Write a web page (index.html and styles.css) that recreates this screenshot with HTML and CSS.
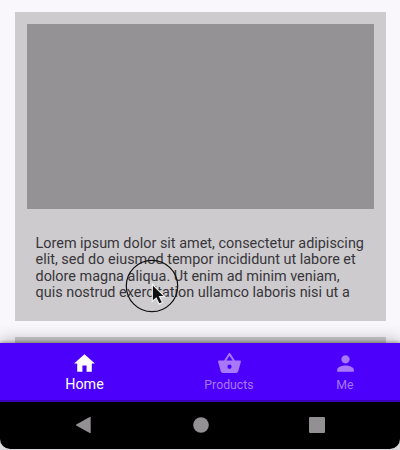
FILE: index.html
```
<!DOCTYPE html>
<html lang="en">
<head>
<meta charset="utf-8">
<title>Home</title>
<link rel="stylesheet" href="styles.css">
</head>
<body>
<div class="screen">
  <main class="feed">
    <article class="card">
      <div class="media"></div>
      <p class="copy"><span class="line">Lorem ipsum dolor sit amet, consectetur adipiscing</span><span class="line">elit, sed do eiusmod tempor incididunt ut labore et</span><span class="line">dolore magna aliqua. Ut enim ad minim veniam,</span><span class="line">quis nostrud exercitation ullamco laboris nisi ut a</span></p>
    </article>
    <article class="card next"></article>
  </main>
  <nav class="tabs">
    <a class="tab active">
      <svg class="icon" viewBox="0 0 24 24"><path d="M10 20v-6h4v6h5v-8h3L12 3 2 12h3v8z"/></svg>
      <span>Home</span>
    </a>
    <a class="tab">
      <svg class="icon" viewBox="0 0 24 24"><path d="M17.21 9l-4.38-6.56c-.19-.28-.51-.42-.83-.42s-.64.14-.83.43L6.79 9H2c-.55 0-1 .45-1 1 0 .09.01.18.04.27l2.54 9.27c.23.84 1 1.46 1.92 1.46h13c.92 0 1.69-.62 1.93-1.46l2.54-9.27L23 10c0-.55-.45-1-1-1h-4.79zM9 9l3-4.4L15 9H9zm3 8c-1.1 0-2-.9-2-2s.9-2 2-2 2 .9 2 2-.9 2-2 2z"/></svg>
      <span>Products</span>
    </a>
    <a class="tab">
      <svg class="icon" viewBox="0 0 24 24"><path d="M12 12c2.21 0 4-1.79 4-4s-1.79-4-4-4-4 1.79-4 4 1.79 4 4 4zm0 2c-2.67 0-8 1.34-8 4v2h16v-2c0-2.66-5.33-4-8-4z"/></svg>
      <span>Me</span>
    </a>
  </nav>
  <footer class="system">
    <svg class="key" viewBox="0 0 18 18"><path d="M15.700 1v16q-.5.300-1 0L1.200 9.500q-.6-.5 0-1L14.700 1q.5-.3 1 0z"/></svg>
    <svg class="key" viewBox="0 0 18 18"><circle cx="9" cy="9" r="7.800"/></svg>
    <svg class="key" viewBox="0 0 18 18"><rect x="1" y="1" width="16" height="16" rx="1"/></svg>
  </footer>
</div>
<svg class="pointer" viewBox="0 0 60 60">
  <circle cx="30" cy="30" r="25.700" fill="none" stroke="#111" stroke-width="1.200"/>
  <path d="M30.300 28.300v17.200l3.900-3.400 2.900 6 3.400-1.600-2.900-5.900h5.200z" fill="#111" stroke="#eee" stroke-width="1.200"/>
</svg>
</body>
</html>
```
FILE: styles.css
```
* { box-sizing: border-box; }
body { margin: 0; background: #dcdadd; font-family: Roboto, "Liberation Sans", sans-serif; }
.screen {
  width: 400px;
  height: 449px;
  display: flex;
  flex-direction: column;
  overflow: hidden;
  border-radius: 0 0 10px 10px;
  background: #f9f7fb;
}
.feed {
  height: 343px;
  flex: none;
  overflow: hidden;
  padding: 12px 14px 0 15px;
}
.card { height: 309px; padding: 12px; background: #cdcbce; }
.card:first-child { width: 371.4px; }
.next { margin-top: 16px; }
.media { height: 185.4px; width: 347px; background: #949295; }
.copy {
  margin: 26.6px 0 0 8.5px;
  color: #38363a;
  font-size: 14.43px;
  line-height: 16.5px;
  white-space: nowrap;
}
.line { display: block; }
.tabs {
  position: relative;
  height: 59px;
  flex: none;
  display: grid;
  grid-template-columns: 169px 120px 112px;
  background: #4c00fb;
  border-bottom: 2px solid #3900b8;
  box-shadow: 0 -1px 3px rgba(0, 0, 0, .3), 0 -2px 16px rgba(0, 0, 0, .28);
}
.tab {
  display: flex;
  flex-direction: column;
  align-items: center;
  padding-top: 8px;
  color: #a878fb;
  font-size: 12.3px;
  line-height: 19px;
}
.active { color: #fff; font-size: 14.3px; line-height: 17px; }
.icon { width: 25px; height: 25px; fill: currentColor; }
.system {
  position: relative;
  flex: 1;
  display: grid;
  grid-template-columns: 117px 117px 116px;
  padding: 0 0 1px 25px;
  align-items: center;
  justify-items: center;
  background: #000;
}
.key { width: 18px; height: 18px; fill: #929093; }
.pointer { position: absolute; left: 122.4px; top: 256.1px; width: 60px; height: 60px; }
```
